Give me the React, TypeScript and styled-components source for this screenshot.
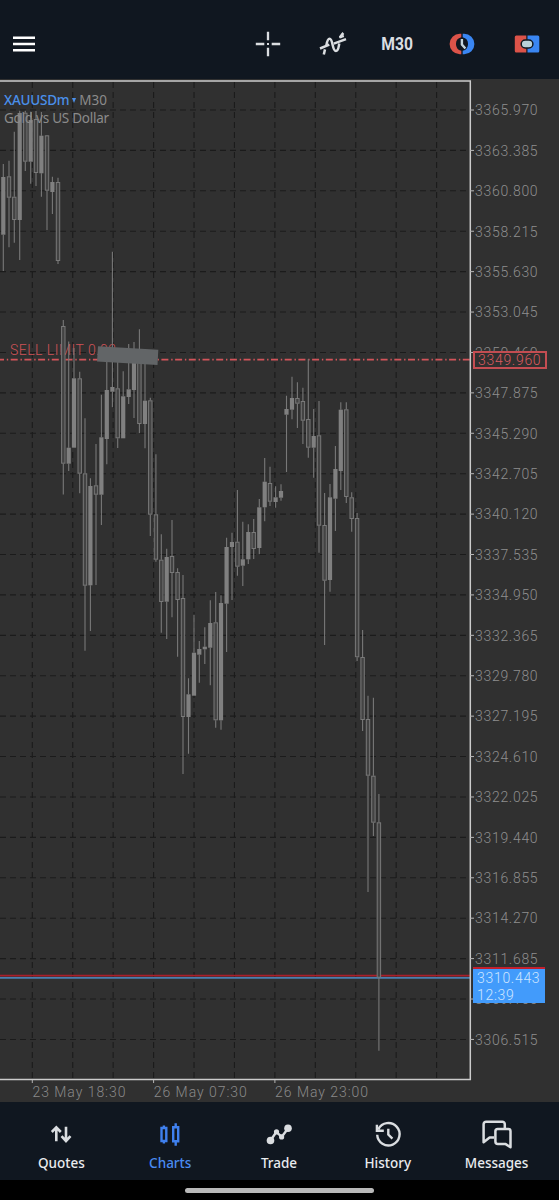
import React from "react";
import styled, { createGlobalStyle } from "styled-components";

const GlobalStyle = createGlobalStyle`
  * { box-sizing: border-box; }
  body { margin: 0; background: #000; font-family: "Noto Sans", "Open Sans", sans-serif; }
  svg { display: block; }
`;

const Screen = styled.div`
  width: 559px;
  height: 1200px;
  display: flex;
  flex-direction: column;
  background: #303030;
  overflow: hidden;
`;

const Header = styled.header`
  height: 79px;
  flex: none;
  padding: 9px 0 0 12px;
  display: flex;
  align-items: center;
  justify-content: space-between;
  background: #101720;
`;

const Tools = styled.div`
  display: grid;
  grid-template-columns: repeat(5, 64.6px);
  align-items: center;
  justify-items: center;
`;

const IconButton = styled.button`
  border: 0;
  padding: 0;
  background: none;
  color: #dadde0;
`;

const TimeframeButton = styled(IconButton)`
  font: 700 18px/24px Roboto, sans-serif;
  transform: scaleX(0.87);
`;

const ChartArea = styled.main`
  position: relative;
  height: 1002px;
  flex: none;
  display: flex;
`;

const ChartTitle = styled.div`
  position: absolute;
  left: 4px;
  top: 12px;
  font-size: 13.5px;
  line-height: 18px;
  letter-spacing: -0.25px;
  color: #8b8b8b;
  white-space: nowrap;
`;

const TitleRow = styled.div`
  display: flex;
  align-items: center;
`;

const Symbol = styled.span`
  color: #4a8fea;
  font-weight: 500;
`;

const Timeframe = styled.span`
  letter-spacing: 0;
`;

const Caret = styled.span`
  width: 0;
  margin: 0 3px 0 3px;
  border: 2.8px solid transparent;
  border-top: 5px solid #4a8fea;
  border-bottom: 0;
`;

const PriceAxis = styled.div`
  width: 87px;
  padding-top: 21.3px;
  display: flex;
  flex-direction: column;
`;

const PriceLabel = styled.div`
  height: 40.41px;
  flex: none;
  padding-left: 3px;
  font: 300 14px/20px Roboto, sans-serif;
  letter-spacing: 0.7px;
  color: #8e8e8e;
`;

const OrderTag = styled.div`
  position: absolute;
  left: 473px;
  top: 272px;
  width: 74px;
  height: 18px;
  padding-left: 3px;
  border: 2px solid #c34d52;
  background: #303030;
  font: 300 14px/15px Roboto, sans-serif;
  letter-spacing: 0.7px;
  color: #dc5a5f;
`;

const BidTag = styled.div`
  position: absolute;
  left: 473px;
  top: 888px;
  width: 71.5px;
  height: 36px;
  padding: 1px 0 0 4px;
  border-top: 2px solid #c4202e;
  background: #429bfb;
  font: 300 14px/17px Roboto, sans-serif;
  letter-spacing: 0.7px;
  color: #cfe6ff;
`;

const TimeAxis = styled.div`
  height: 21px;
  flex: none;
  padding-left: 32px;
  display: flex;
  font: 300 14px/22px Roboto, sans-serif;
  color: #8a8a8a;
`;

const TimeLabel = styled.span`
  width: 121.3px;
  flex: none;
  padding-left: 0.5px;
  letter-spacing: 0.95px;
  white-space: nowrap;
`;

const NavBar = styled.nav`
  height: 78px;
  flex: none;
  padding: 0 8px 0 7px;
  display: grid;
  grid-template-columns: repeat(5, 1fr);
  background: #101720;
`;

const NavItem = styled.a<{ $active?: boolean }>`
  display: flex;
  flex-direction: column;
  align-items: center;
  padding-top: 17px;
  gap: 2.5px;
  font-size: 13.5px;
  line-height: 22px;
  font-weight: 500;
  color: ${(p) => (p.$active ? "#4a8bf0" : "#e9ebee")};
  svg { color: ${(p) => (p.$active ? "#3f80ee" : "#dadde0")}; }
`;

const HomeBar = styled.footer`
  height: 20px;
  flex: none;
  display: flex;
  justify-content: center;
  padding-top: 7.5px;
  background: #000;
`;

const Pill = styled.div`
  width: 189px;
  height: 5px;
  border-radius: 3px;
  background: #b9b9b9;
`;

// x, high, body top, body bottom, low, rising
const candles: number[][] = [
  [3.3, 164, 177, 234.7, 271, 1], [9, 160.7, 176.3, 197.7, 247.3, 0],
  [14.3, 131.7, 196.7, 220, 242.7, 0], [19.7, 110.7, 113, 220, 260, 1],
  [25.3, 110.7, 112.7, 161.7, 171, 0], [30.7, 111.7, 120, 161.7, 183.7, 1],
  [36, 111, 119, 173, 186, 0], [41.4, 112, 135.7, 173.3, 196.7, 1],
  [47, 135, 135.3, 190.7, 230, 0], [52.4, 176.7, 182, 192, 214, 1],
  [58, 177.7, 182, 261, 264, 0], [63.3, 320, 326, 463.7, 494.5, 0],
  [68.7, 341.5, 447.7, 463.7, 471, 1], [74, 348, 378.3, 447.7, 447.7, 1],
  [79.7, 371.7, 378.3, 473.7, 493.3, 0], [85, 418.3, 473.3, 585.7, 650.7, 0],
  [90.4, 478.3, 486, 585.3, 631, 1], [96, 444, 485.3, 494.7, 585, 0],
  [101.4, 394.7, 437.3, 494.7, 525, 1], [106.8, 355, 390, 439, 464.3, 1],
  [112.4, 251.7, 387, 391.7, 407.3, 1], [117.7, 358, 388.3, 438.3, 448, 0],
  [123.2, 371.3, 396.3, 438.3, 438.3, 1], [128.7, 344, 389.3, 397, 404, 1],
  [134, 342, 358, 390, 418, 1], [139.4, 329.3, 358, 424, 433, 0],
  [145, 360, 400.7, 424, 448.3, 1], [150.3, 397.7, 400.3, 514.7, 536, 0],
  [155.9, 454.3, 514.3, 559.7, 561.7, 0], [161.3, 534.3, 559.7, 602, 632.7, 0],
  [166.7, 548.7, 557, 601.7, 639, 1], [172, 520, 556, 573, 617.3, 0],
  [177.6, 568.3, 572, 600, 656.7, 0], [183, 575, 598, 717, 774, 0],
  [188.5, 678.3, 694.3, 717, 753.7, 1], [194, 614.7, 652.7, 695.7, 695.7, 1],
  [199.3, 641, 649, 654.7, 682.7, 1], [204.8, 627.3, 646.7, 649.3, 664, 1],
  [210.3, 600.3, 623, 647.7, 685.3, 1], [215.7, 592, 622.3, 720.3, 727.7, 0],
  [221, 595.3, 603, 720.3, 729.7, 1], [226.6, 537.7, 547, 603.7, 652, 1],
  [232, 532.7, 542, 547, 600, 1], [237.4, 490, 541.7, 566.7, 575.7, 0],
  [242.8, 521.7, 559.3, 565.7, 586, 1], [248.3, 524.3, 532, 559.3, 564, 1],
  [253.7, 519, 532, 549, 559, 0], [259.3, 499, 507.3, 548, 554, 1],
  [264.7, 458, 481.7, 507.3, 521.3, 1], [270, 466.7, 483, 501.7, 506, 0],
  [275.6, 486.3, 497.3, 502, 507.7, 1], [281, 484.3, 491, 497.7, 500.7, 1],
  [286.5, 395.7, 409, 414.7, 472, 1], [292, 376.7, 398, 409.7, 419.3, 1],
  [297.4, 382.3, 398, 403.7, 428, 0], [302.9, 387.7, 401, 420.7, 444, 0],
  [308.3, 359, 419, 447.7, 457.7, 0], [313.7, 409, 436, 447.7, 477.7, 1],
  [319, 401, 435.3, 525.7, 552.7, 0], [324.6, 493, 525, 580.7, 645, 0],
  [330, 484, 497.3, 580, 591.7, 1], [335.4, 446, 469, 498.7, 531, 1],
  [340.8, 402.3, 409.7, 471, 490, 1], [346.3, 402.3, 409.3, 497, 503, 0],
  [351.7, 492.3, 497.3, 519, 531.7, 0], [357.1, 513, 518, 657.3, 661, 0],
  [362.6, 630, 657, 720, 731, 0], [368, 695.7, 719, 775.7, 892, 0],
  [373.4, 697.7, 775.7, 822.7, 836, 0], [378.9, 794, 822.3, 977.7, 1050.7, 0],
];

const columns = Array.from({ length: 11 }, (_, i) => 32.3 + i * 40.43);
const rows = Array.from({ length: 24 }, (_, i) => 110 + i * 40.41);
const prices = rows.map((_, i) => (3365.97 - i * 2.585).toFixed(3));

const PlotSvg = styled.svg`
  flex: none;
  overflow: visible;
`;

const Chart = () => (
  <PlotSvg width="472" height="1004" viewBox="0 79 472 1004">
    <g stroke="#1b1b1b" strokeWidth="1.1" strokeDasharray="6 4" fill="none">
      {columns.map((x) => <path key={x} d={`M${x} 82V1079`} />)}
      {rows.map((y) => <path key={y} d={`M0 ${y}H470`} />)}
    </g>
    <text x="10" y="355.3" fill="#cf5257" fontFamily="Roboto" fontWeight="300" fontSize="14" textLength="106">SELL LIMIT 0.02</text>
    <path d="M-3 359.6H470" stroke="#d2545a" strokeWidth="1.9" strokeDasharray="7 2.8 1.4 2.5" />
    <path d="M0 975.6H470" stroke="#a81f2b" strokeWidth="1.8" />
    <path d="M0 977.9H470" stroke="#4a80b0" strokeWidth="1.6" />
    {candles.map(([x, high, top, bottom, low, rising]) => (
      <g key={x}>
        <path d={`M${x} ${high}V${top}M${x} ${bottom}V${low}`} stroke="#787878" strokeWidth="1.1" />
        {rising ? (
          <rect x={x - 2.1} y={top} width="4.2" height={bottom - top} fill="#808080" />
        ) : (
          <rect x={x - 1.7} y={top + 0.5} width="3.4" height={Math.max(bottom - top - 1, 1)} fill="#434343" stroke="#797979" strokeWidth="1" />
        )}
      </g>
    ))}
    <path d="M98 346.3L158.3 349.8L157.5 365L97 361.5Z" fill="#626567" />
    <path d="M0 80.9H470.3V1079.5H0" fill="none" stroke="#cbcbcb" strokeWidth="1.5" />
    <path d={rows.map((y) => `M470 ${y}H474`).join("")} stroke="#b5b5b5" />
    <path d="M32.3 1080V1083M153.6 1080V1083M274.9 1080V1083" stroke="#b5b5b5" />
  </PlotSvg>
);

const MenuIcon = () => (
  <svg width="24" height="24" viewBox="0 0 24 24" stroke="#fff" strokeWidth="2.5">
    <path d="M1 5.7H23M1 12H23M1 18.3H23" />
  </svg>
);
const CrosshairIcon = () => (
  <svg width="26" height="26" viewBox="0 0 26 26" stroke="currentColor" strokeWidth="2.3">
    <path d="M13 .8V9.3M13 16.7V25.2M.8 13H9.3M16.7 13H25.2" />
    <path d="M12 13H14" strokeWidth="2" />
  </svg>
);
const IndicatorIcon = () => (
  <svg width="28" height="26" viewBox="0 0 28 26" fill="none" stroke="currentColor" strokeWidth="2.5">
    <path d="M4.8 23.5L6 18.4M7.3 14.6C8 10.5 8.7 7.8 10.6 7.8C14.2 7.8 13 20 16.9 20C19.6 20 19.6 15.2 20.3 12.5M21 6.8C21.9 4.9 23.1 3.2 24.4 2" />
    <path d="M1 17.5L10.3 13.6M14.8 12.6L27 8.1M20.4 6.3L24.8 4.8" />
  </svg>
);
const ClockIcon = () => (
  <svg width="26" height="22" viewBox="0 0 26 22">
    <path d="M12.3.8H10.8A10.2 10.2 0 0 0 10.8 21.2H12.3V17.8A7 7 0 0 1 12.3 4.2Z" fill="#dc5349" />
    <path d="M13.7.8H15.2A10.2 10.2 0 0 1 15.2 21.2H13.7V17.8A7 7 0 0 0 13.7 4.2Z" fill="#3a86f2" />
    <path d="M12.9 6V11.6L16.4 15.5" fill="none" stroke="#c4d5dc" strokeWidth="2.4" />
  </svg>
);
const TradePanelIcon = () => (
  <svg width="26" height="18" viewBox="0 0 26 18">
    <path d="M2.3.5H12.3V17.5H2.3A1.5 1.5 0 0 1 .8 16V2A1.5 1.5 0 0 1 2.3.5Z" fill="#dc5349" />
    <path d="M13.5.5H23.8A1.5 1.5 0 0 1 25.3 2V16A1.5 1.5 0 0 1 23.8 17.5H13.5Z" fill="#3a86f2" />
    <rect x="7.2" y="5" width="11.7" height="8" rx="4" fill="#b9d0d8" stroke="#101720" strokeWidth="1.5" />
  </svg>
);

const QuotesIcon = () => (
  <svg width="30" height="30" viewBox="0 0 30 30" fill="none" stroke="currentColor" strokeWidth="2.6">
    <path d="M10.3 22.2V8.5M5.8 13L10.3 8.3L14.8 13M20 7.8V21.8M15.5 17.2L20 22L24.5 17.2" />
  </svg>
);
const ChartsIcon = () => (
  <svg width="30" height="30" viewBox="0 0 30 30" fill="none" stroke="currentColor" strokeWidth="2.4">
    <path d="M6.5 9H11.3V22H6.5ZM8.9 6.5V9M8.9 22V24.5M18.2 8.2H23.2V22.2H18.2ZM20.7 4.2V8.2M20.7 22.2V26.8" />
  </svg>
);
const TradeIcon = () => (
  <svg width="30" height="30" viewBox="0 0 30 30" fill="none" stroke="currentColor" strokeWidth="2.4">
    <path d="M6.5 21.5L12.3 13L17.8 17.8L24 9.5" />
    <g fill="currentColor" stroke="none">
      <circle cx="6.5" cy="21.5" r="3.8" /><circle cx="12.5" cy="12.8" r="2.6" />
      <circle cx="17.6" cy="17.9" r="2.6" /><circle cx="24" cy="9.3" r="3.8" />
    </g>
  </svg>
);
const HistoryIcon = () => (
  <svg width="30" height="30" viewBox="0 0 30 30" fill="none" stroke="currentColor" strokeWidth="2.4">
    <path d="M4.2 15.8A11.2 11.2 0 1 0 5.4 10.2M3.9 5.8V11.7H10.8M15.3 9.7V15.6L19.4 19.7" />
  </svg>
);
const MessagesIcon = () => (
  <svg width="32" height="30" viewBox="0 0 32 30" fill="none" stroke="currentColor" strokeWidth="2.5" strokeLinejoin="round">
    <path d="M13 18.6H8.6L2.6 23.3V5.2A2.5 2.5 0 0 1 5.1 2.7H21.3A2.5 2.5 0 0 1 23.8 5.2V9.5" />
    <path d="M16.7 10H27.3A2.2 2.2 0 0 1 29.5 12.2V28.2L24.7 25.1H16.9A2.5 2.5 0 0 1 14.4 22.6V12.3A2.3 2.3 0 0 1 16.7 10Z" />
  </svg>
);

const navItems = [
  { label: "Quotes", Icon: QuotesIcon },
  { label: "Charts", Icon: ChartsIcon },
  { label: "Trade", Icon: TradeIcon },
  { label: "History", Icon: HistoryIcon },
  { label: "Messages", Icon: MessagesIcon },
];

export default function App() {
  return (
    <Screen>
      <GlobalStyle />
      <Header>
        <IconButton><MenuIcon /></IconButton>
        <Tools>
          <IconButton><CrosshairIcon /></IconButton>
          <IconButton><IndicatorIcon /></IconButton>
          <TimeframeButton>M30</TimeframeButton>
          <IconButton><ClockIcon /></IconButton>
          <IconButton><TradePanelIcon /></IconButton>
        </Tools>
      </Header>
      <ChartArea>
        <Chart />
        <PriceAxis>
          {prices.map((price) => <PriceLabel key={price}>{price}</PriceLabel>)}
        </PriceAxis>
        <ChartTitle>
          <TitleRow><Symbol>XAUUSDm</Symbol><Caret /><Timeframe>M30</Timeframe></TitleRow>
          <div>Gold vs US Dollar</div>
        </ChartTitle>
        <OrderTag>3349.960</OrderTag>
        <BidTag><div>3310.443</div><div>12:39</div></BidTag>
      </ChartArea>
      <TimeAxis>
        <TimeLabel>23 May 18:30</TimeLabel>
        <TimeLabel>26 May 07:30</TimeLabel>
        <TimeLabel>26 May 23:00</TimeLabel>
      </TimeAxis>
      <NavBar>
        {navItems.map(({ label, Icon }) => (
          <NavItem key={label} $active={label === "Charts"}><Icon />{label}</NavItem>
        ))}
      </NavBar>
      <HomeBar><Pill /></HomeBar>
    </Screen>
  );
}
